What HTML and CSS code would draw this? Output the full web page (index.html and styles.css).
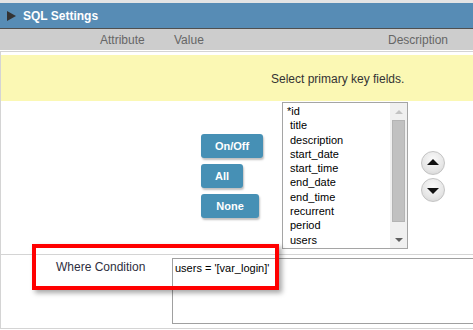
FILE: index.html
```html
<!DOCTYPE html>
<html lang="en">
<head>
    <meta charset="UTF-8">
    <title>SQL Settings</title>
    <link rel="stylesheet" href="styles.css">
</head>
<body>
    <div class="settings-panel">
        <div class="panel-title">
            <span class="title-arrow"></span>
            <span class="title-text">SQL Settings</span>
        </div>
        <div class="column-head">
            <div class="col-attr">Attribute</div>
            <div class="col-value">Value</div>
            <div class="col-desc">Description</div>
        </div>
        <div class="panel-body">
            <div class="hint-row">Select primary key fields.</div>
            <div class="pk-row">
                <div class="pk-buttons">
                    <button class="action-btn btn-toggle">On/Off</button>
                    <button class="action-btn btn-all">All</button>
                    <button class="action-btn btn-none">None</button>
                </div>
                <div class="field-list">
                    <ul class="field-items">
                        <li class="pk">*id</li>
                        <li>title</li>
                        <li>description</li>
                        <li>start_date</li>
                        <li>start_time</li>
                        <li>end_date</li>
                        <li>end_time</li>
                        <li>recurrent</li>
                        <li>period</li>
                        <li>users</li>
                    </ul>
                    <div class="list-scroll">
                        <span class="scroll-arrow up"></span>
                        <span class="scroll-thumb"></span>
                        <span class="scroll-arrow down"></span>
                    </div>
                </div>
                <div class="order-buttons">
                    <button class="round-btn"><span class="tri up"></span></button>
                    <button class="round-btn"><span class="tri down"></span></button>
                </div>
            </div>
            <div class="where-row">
                <div class="where-label">Where Condition</div>
                <div class="where-value">
                    <textarea class="where-input">users = '[var_login]'</textarea>
                </div>
            </div>
            <!-- annotation frame -->
            <div class="highlight-box"></div>
        </div>
    </div>
</body>
</html>
```

FILE: styles.css
```css
body {
    margin: 0;
    background: #fff;
    font-family: "Liberation Sans", Arial, sans-serif;
    overflow: hidden;
}
.settings-panel {
    width: 520px;
    border-top: 3px solid #e4e4e4;
}
.panel-title {
    height: 25px;
    background: #578cb5;
    border-bottom: 1px solid #4f4f4f;
    display: flex;
    align-items: center;
    padding-left: 7px;
}
.title-arrow {
    width: 0;
    height: 0;
    border-top: 5px solid transparent;
    border-bottom: 5px solid transparent;
    border-left: 9px solid #333;
    margin-right: 7px;
}
.title-text {
    color: #fff;
    font-weight: 700;
    font-size: 12px;
}
.column-head {
    height: 21px;
    background: #cdcdcd;
    display: flex;
    align-items: center;
    font-size: 12px;
    color: #666;
    border-bottom: 1px solid #fff;
}
.col-attr {
    padding-left: 100px;
    box-sizing: border-box;
    width: 174px;
}
.col-value {
    width: 214px;
}
.panel-body {
    position: relative;
    border-top: 1px solid #d4d4d4;
    border-left: 1px solid #d4d4d4;
    padding-top: 3px;
}
.hint-row {
    height: 46px;
    background: #fbf8b4;
    display: flex;
    align-items: center;
    padding-left: 270px;
    font-size: 12px;
    color: #333;
    padding-top: 1px;
    box-sizing: border-box;
}
.pk-row {
    display: flex;
    align-items: center;
    padding: 1px 0 5px 200px;
    border-bottom: 1px solid #d4d4d4;
}
.pk-buttons {
    display: flex;
    flex-direction: column;
    align-items: flex-start;
    gap: 6px;
    margin-right: 19px;
}
.action-btn {
    height: 24px;
    padding: 0;
    background: #4690b5;
    color: #fff;
    border: none;
    border-radius: 3px;
    font-family: inherit;
    font-size: 11px;
    font-weight: 700;
    box-shadow: 1px 2px 2px rgba(0,0,0,0.25);
}
.btn-toggle {
    width: 62px;
}
.btn-all {
    width: 42px;
}
.btn-none {
    width: 58px;
}
.field-list {
    width: 126px;
    height: 147px;
    border: 1px solid #a5a5a5;
    box-sizing: border-box;
    display: flex;
}
.field-items {
    flex: 1;
    list-style: none;
    margin: 0;
    padding: 1px 0 0 4px;
    font-size: 11px;
    line-height: 14.3px;
    color: #000;
    overflow: hidden;
    white-space: nowrap;
}
.field-items li {
    padding-left: 3px;
}
.field-items li.pk {
    padding-left: 0;
}
.list-scroll {
    width: 17px;
    background: #f0f0f0;
    display: flex;
    flex-direction: column;
    align-items: center;
}
.scroll-thumb {
    width: 13px;
    height: 102px;
    background: #c1c1c1;
    border: 1px solid #b4b4b4;
    box-sizing: border-box;
}
.scroll-arrow {
    width: 0;
    height: 0;
    border-left: 4px solid transparent;
    border-right: 4px solid transparent;
}
.scroll-arrow.up {
    border-bottom: 4px solid #c3c3c3;
    margin: 7px 0 6px;
}
.scroll-arrow.down {
    border-top: 4px solid #606060;
    margin: auto 0 6px;
}
.order-buttons {
    display: flex;
    flex-direction: column;
    gap: 3px;
    margin-left: 13px;
    padding-top: 1px;
}
.round-btn {
    width: 24px;
    height: 24px;
    padding: 0;
    border-radius: 50%;
    border: 1px solid #c4c4c4;
    background: radial-gradient(circle at 50% 35%, #fafafa 0%, #e6e6e6 60%, #cfcfcf 100%);
    display: flex;
    align-items: center;
    justify-content: center;
}
.tri {
    width: 0;
    height: 0;
    border-left: 6px solid transparent;
    border-right: 6px solid transparent;
}
.tri.up {
    border-bottom: 6px solid #111;
    margin-bottom: 2px;
}
.tri.down {
    border-top: 6px solid #111;
    margin-top: 2px;
}
.where-row {
    display: flex;
    height: 74px;
    padding-top: 3px;
    box-sizing: border-box;
    border-bottom: 1px solid #d4d4d4;
}
.where-label {
    width: 171px;
    padding-left: 55px;
    box-sizing: border-box;
    font-size: 12px;
    color: #2e2e3e;
    padding-top: 2px;
}
.where-value {
    flex: 1;
}
.where-input {
    width: 330px;
    height: 66px;
    border: 1px solid #a0a0a0;
    margin: 0;
    padding: 3px 2px;
    box-sizing: border-box;
    font-family: inherit;
    font-size: 11px;
    color: #000;
    resize: none;
}
.highlight-box {
    position: absolute;
    left: 31px;
    top: 192px;
    width: 247px;
    height: 46px;
    box-sizing: border-box;
    border: 4px solid #f00;
    box-shadow: 3px 3px 5px rgba(0,0,0,0.35);
}
```
